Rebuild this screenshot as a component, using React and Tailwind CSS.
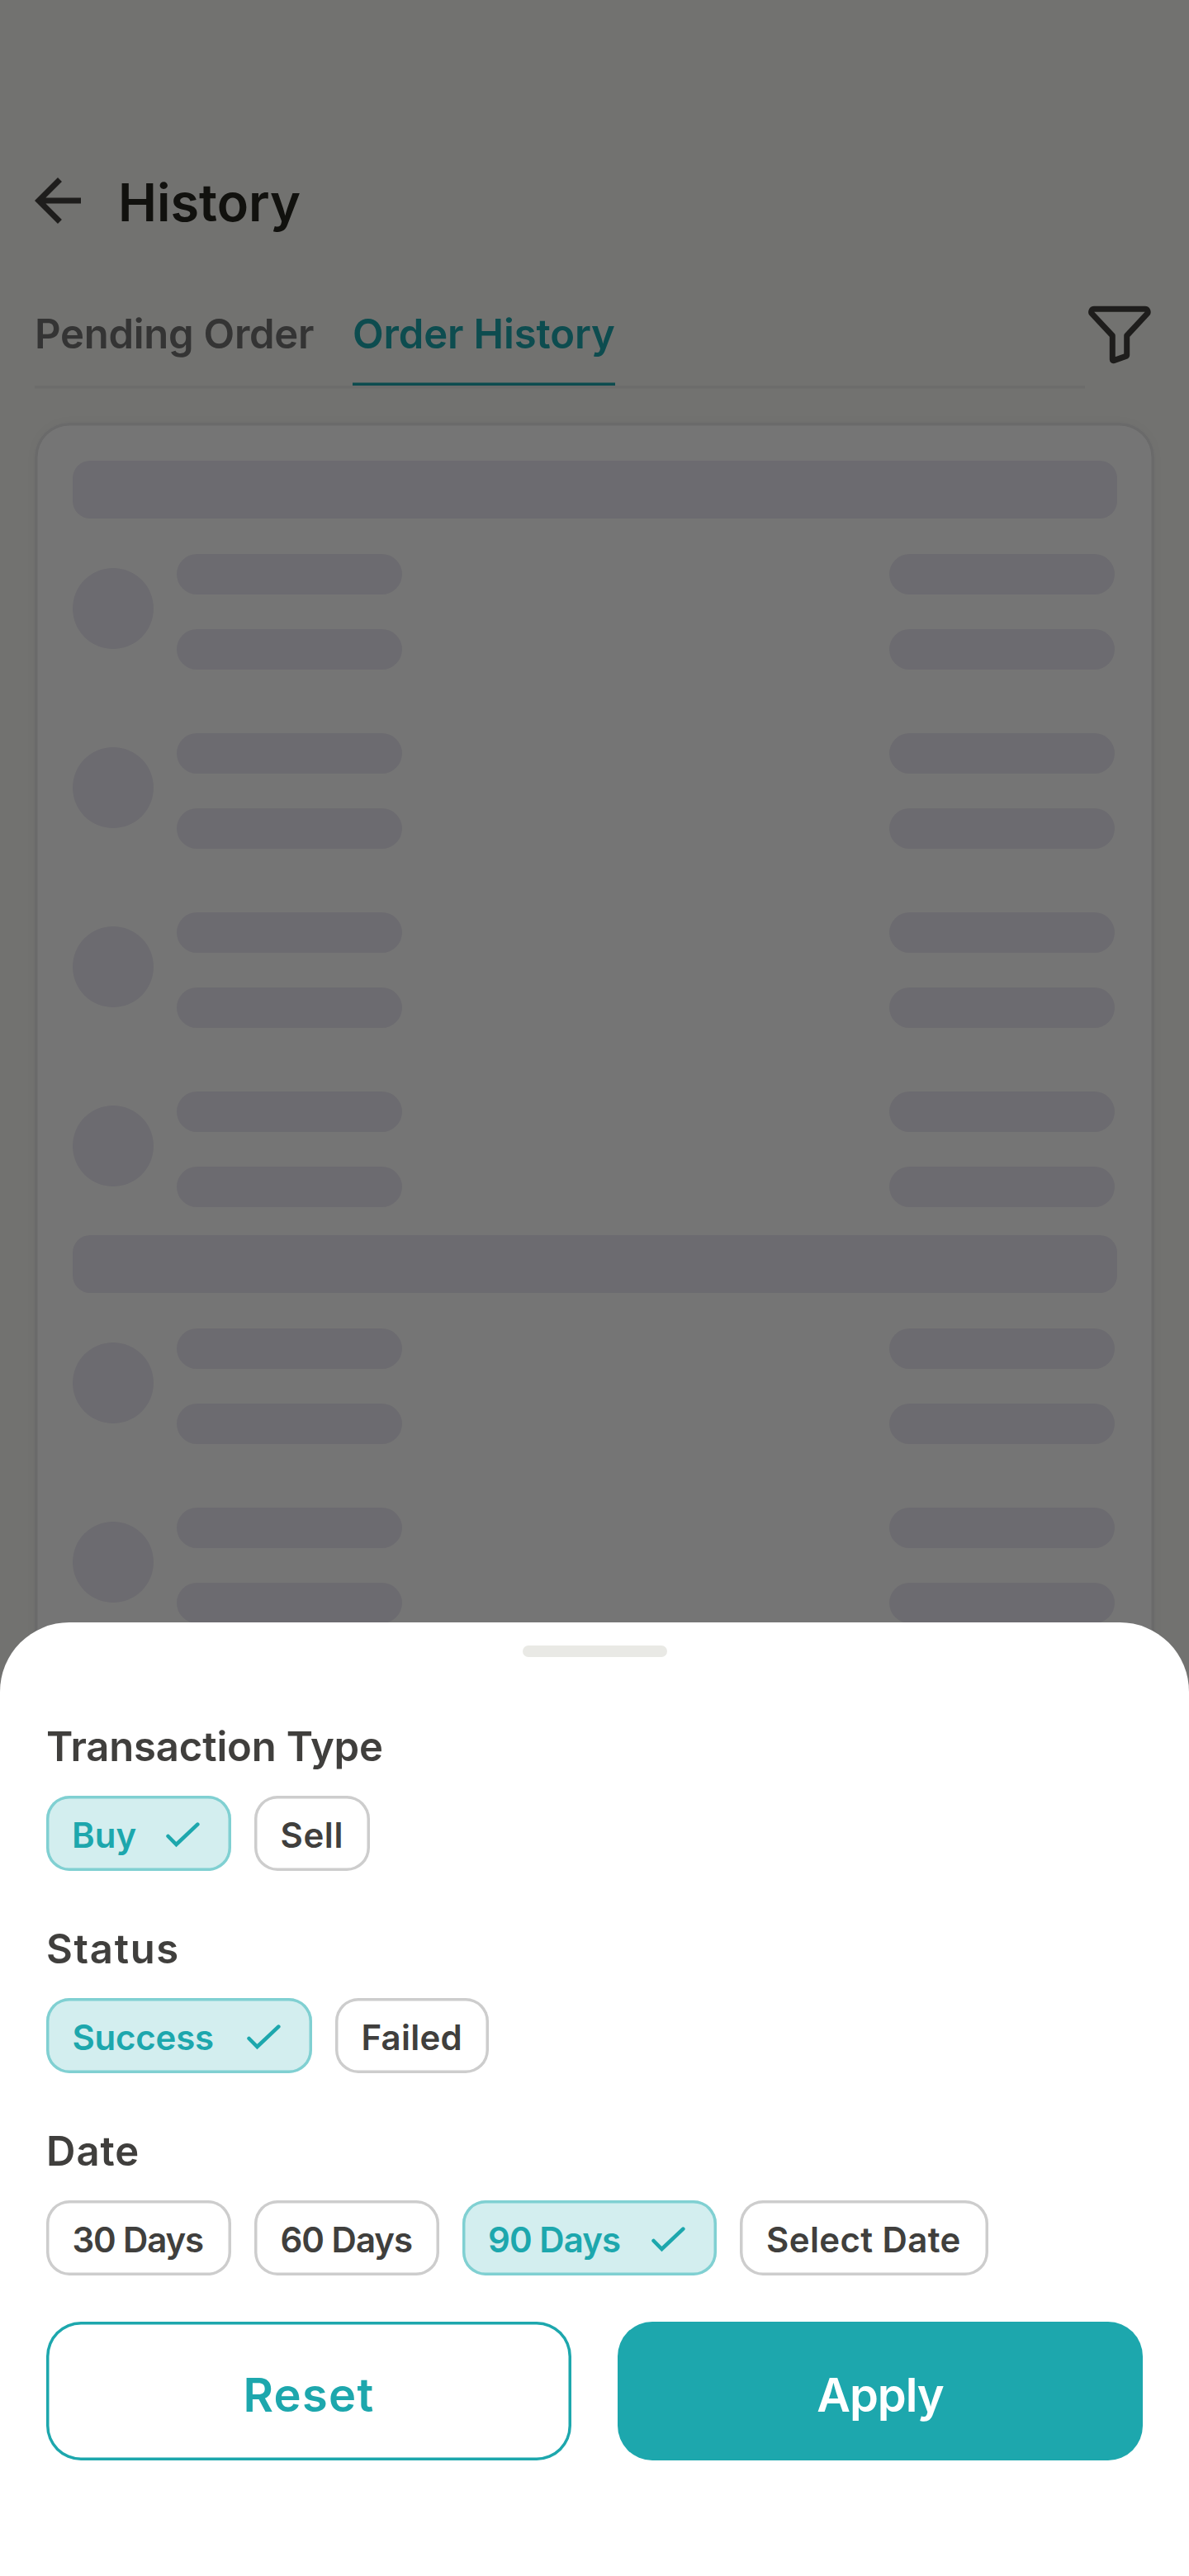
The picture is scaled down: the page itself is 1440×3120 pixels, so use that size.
function ArrowBack() {
  return (
    <svg viewBox="0 0 24 24" className="h-[84px] w-[84px] shrink-0" fill="#43413d">
      <path d="M20 11H7.83l5.59-5.59L12 4l-8 8 8 8 1.41-1.41L7.83 13H20v-2z" />
    </svg>
  )
}

function FilterIcon() {
  return (
    <svg viewBox="0 0 84 84" className="h-[84px] w-[84px] shrink-0" fill="none" stroke="#43413d" strokeWidth="7" strokeLinejoin="round">
      <path d="M11.2 10.3H72.6a3.5 3.5 0 0 1 2.6 5.9L50.7 42.5V66q0 1-1 1.4L35 72.6q-1.7.5-1.7-1V42.5L8.6 16.2a3.5 3.5 0 0 1 2.6-5.9z" />
    </svg>
  )
}

function CheckIcon() {
  return (
    <svg viewBox="0 0 42 42" className="h-[42px] w-[42px] shrink-0" fill="none" stroke="#1da7ad" strokeWidth="4.6" strokeLinecap="round" strokeLinejoin="miter">
      <path d="M3.6 24L13.5 34L39.3 9.7" />
    </svg>
  )
}

function Pills() {
  return (
    <div className="flex w-[273.5px] flex-col gap-[42px]">
      <div className="h-[49px] rounded-full bg-[#ebe9f3]" />
      <div className="h-[49px] rounded-full bg-[#ebe9f3]" />
    </div>
  )
}

function SkeletonGroup({ rows }) {
  return (
    <div>
      <div className="mb-[43px] h-[70px] rounded-[21px] bg-[#ebe9f3]" />
      <div className="flex flex-col gap-[77px]">
        {Array.from({ length: rows }, (_, i) => (
          <div key={i} className="flex pr-[2.5px]">
            <div className="mt-[16.5px] mr-7 h-[98px] w-[98px] shrink-0 rounded-full bg-[#ebe9f3]" />
            <Pills />
            <div className="ml-auto">
              <Pills />
            </div>
          </div>
        ))}
      </div>
    </div>
  )
}

function Chip({ label, size, active }) {
  const tone = active
    ? 'bg-[#d3eeef] text-[#1da7ad] shadow-[inset_0_0_0_3.5px_#80d0d2]'
    : 'bg-white text-[#403f3d] shadow-[inset_0_0_0_3.5px_#cdcdcd]'
  return (
    <button className={`flex h-[91px] shrink-0 items-center justify-between rounded-[28px] pr-[38px] whitespace-nowrap ${tone} ${size}`}>
      <span className="pt-1">{label}</span>
      {active && <CheckIcon />}
    </button>
  )
}

function FilterSection({ title, spacing, children }) {
  return (
    <section>
      <h2 className={`mb-[26px] pt-px text-[49px] leading-[66px] text-[#403f3d] ${spacing}`}>{title}</h2>
      <div className="flex gap-7 text-[42px] leading-[56px]">{children}</div>
    </section>
  )
}

export default function App() {
  return (
    <div className="relative h-[3120px] w-[1440px] overflow-hidden bg-[#f8f8f3] font-['Inter',sans-serif] font-semibold">
      <header className="flex items-center gap-[31px] pt-[201px] pl-7">
        <ArrowBack />
        <h1 className="pt-[5px] text-[63px] leading-[79px] text-[#27251f]">History</h1>
      </header>

      <div className="mt-[79px] flex h-[107px] px-[42px]">
        <nav className="flex w-[1272px] flex-col pt-2 text-[49px] leading-[66px]">
          <div className="flex h-[95px]">
            <span className="w-[385px] tracking-[-0.26px] whitespace-nowrap text-[#717171]">Pending Order</span>
            <span className="w-[318px] tracking-[-0.13px] whitespace-nowrap text-[#1da7ad] shadow-[inset_0_-3.5px_0_#1da7ad]">Order History</span>
          </div>
          <div className="h-1 shadow-[inset_0_3.5px_0_#ebebea]" />
        </nav>
        <FilterIcon />
      </div>

      <main className="mx-[42px] mt-[41px] flex h-[1700px] flex-col gap-[34px] rounded-[42px] bg-white px-[45.5px] pt-[46px] shadow-[inset_0_0_0_3.5px_#e7e7e8,0_0_14px_rgba(0,0,0,0.03)]">
        <SkeletonGroup rows={4} />
        <SkeletonGroup rows={3} />
      </main>

      <div className="absolute inset-0 bg-black/54" />

      <div className="absolute inset-x-0 bottom-0 h-[1155px] rounded-t-[84px] bg-white px-14 pt-7">
        <div className="mx-auto h-[14px] w-[175px] rounded-[7px] bg-[#e9e9e5]" />
        <div className="mt-[75px] flex flex-col gap-[61px]">
          <FilterSection title="Transaction Type" spacing="tracking-[-0.15px]">
            <Chip label="Buy" size="w-[224px] pl-[31px]" active />
            <Chip label="Sell" size="w-[140px] pl-[31.5px] tracking-[0.6px]" />
          </FilterSection>
          <FilterSection title="Status" spacing="tracking-[1.7px]">
            <Chip label="Success" size="w-[322px] pl-[31.5px] tracking-[-0.23px]" active />
            <Chip label="Failed" size="w-[186px] pl-[31.5px] tracking-[0.23px]" />
          </FilterSection>
          <FilterSection title="Date" spacing="tracking-[1px]">
            <Chip label="30 Days" size="w-[224px] pl-[31.5px] tracking-[-1.16px]" />
            <Chip label="60 Days" size="w-[224px] pl-[31.5px] tracking-[-1.02px]" />
            <Chip label="90 Days" size="w-[308px] pl-[31px] tracking-[-0.94px]" active />
            <Chip label="Select Date" size="w-[301px] pl-8 tracking-[0.38px]" />
          </FilterSection>
        </div>
        <div className="mt-14 flex gap-14 text-[56px] leading-[76px]">
          <button className="flex h-[168px] flex-1 items-center justify-center rounded-[42px] text-[#1da7ad] shadow-[inset_0_0_0_3.5px_#1da7ad]">
            <span className="pt-[9px] tracking-[1.3px]">Reset</span>
          </button>
          <button className="flex h-[168px] flex-1 items-center justify-center rounded-[42px] bg-[#1da7ad] text-white">
            <span className="pt-[9px] tracking-[-1.06px]">Apply</span>
          </button>
        </div>
      </div>
    </div>
  )
}
